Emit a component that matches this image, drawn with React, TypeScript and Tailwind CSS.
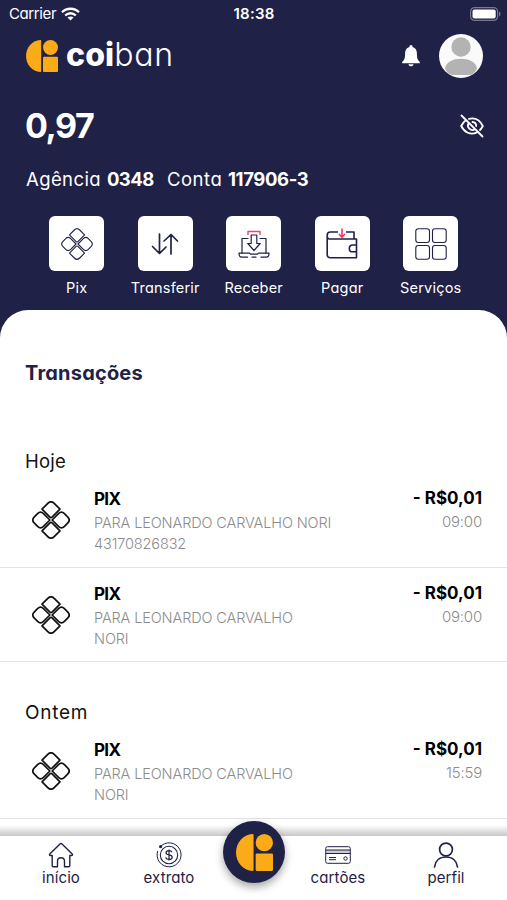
import type { ReactNode } from "react";

const LogoMark = ({ className }: { className?: string }) => (
  <svg viewBox="0 0 32 32" className={className} fill="#fbab18">
    <path d="M14.2 0C6.2.4 0 7.6 0 16s6.2 15.600 14.200 16c.6 0 1-.4 1-1V1c0-.6-.4-1-1-1z" />
    <circle cx="24.500" cy="7.500" r="7.500" />
    <rect x="17" y="16.800" width="15" height="15.200" rx="1" />
  </svg>
);

const PixIcon = ({ className }: { className?: string }) => (
  <svg viewBox="0 0 38 38" className={className} fill="none" stroke="currentColor" strokeLinejoin="round">
    <g transform="rotate(45 19 19)">
      <path d="M19.800 18.200V9.200Q19.800 5 24 5H28.500Q33 5 33 9.500V14Q33 18.200 28.800 18.200z" />
      <path d="M18.200 19.800V28.800Q18.200 33 14 33H9.500Q5 33 5 28.500V24Q5 19.800 9.200 19.800z" />
      <path d="M9.500 5H17.700V16.200Q17.700 17.700 16.200 17.700H5V9.500Q5 5 9.500 5z" />
      <path d="M28.500 33H20.300V21.800Q20.300 20.300 21.800 20.300H33V28.500Q33 33 28.500 33z" />
    </g>
  </svg>
);

const TransferIcon = () => (
  <svg viewBox="0 0 28 22" className="w-7 h-[22px]" fill="none" stroke="#1f2147" strokeWidth="1.700" strokeLinecap="round" strokeLinejoin="round">
    <path d="M8.500 1v19M1.500 13.500l7 7 6.500-6.500M20 21V1.500M13 8l7-6.500L26.500 8" />
  </svg>
);

const ReceiveIcon = () => (
  <svg viewBox="0 0 32 28" className="w-8 h-7" fill="none" stroke="#1f2147" strokeWidth="1.200" strokeLinejoin="round" strokeLinecap="round">
    <path d="M10 5V1.500h12V5" stroke="#f0436b" strokeLinecap="butt" strokeWidth="1.400" />
    <path d="M10 8.500H4v14.500M22 8.500h6v14.500" />
    <path d="M13.200 5h5.600v8.500h3.400L16 20.500 9.800 13.500h3.400z" />
    <path d="M1 23.200h10.500l1 1h7l1-1H31c0 2.500-1 4-2.500 4H23M18 27.200h-4M9.500 27.200h-6C2 27.200 1 25.700 1 23.200" />
  </svg>
);

const WalletIcon = () => (
  <svg viewBox="0 0 32 32" className="w-8 h-8" fill="none" stroke="#1f2147" strokeWidth="1.600" strokeLinejoin="round">
    <path d="M12 4H4.500C2.500 4 1.200 5.200 1.200 7v19.500c0 2 1.300 3.300 3.300 3.300h26V11H3C1.800 10.500 1.200 9.500 1.200 8M20 4h8v7" />
    <path d="M30.500 17h-3.800c-4.500 0-4.500 6.800 0 6.800h3.800" />
    <path d="M16 .5V9M13 6l3 3.200L19 6" stroke="#ef3564" />
  </svg>
);

const GridIcon = () => (
  <svg viewBox="0 0 32 32" className="w-8 h-8" fill="none" stroke="#1f2147" strokeWidth="1.100">
    <rect x=".8" y=".8" width="13.700" height="13.700" rx="2.500" />
    <rect x="17.500" y=".8" width="13.700" height="13.700" rx="2.500" />
    <rect x=".8" y="17.500" width="13.700" height="13.700" rx="2.500" />
    <rect x="17.500" y="17.500" width="13.700" height="13.700" rx="2.500" />
  </svg>
);

const HomeIcon = () => (
  <svg viewBox="0 0 26 26" className="w-[26px] h-[26px]" fill="none" stroke="#1f2147" strokeWidth="1.400" strokeLinejoin="round">
    <path d="M4.200 13.500v10.300c0 .6.400 1 1 1h4.300v-5.500c0-4.700 7-4.700 7 0v5.500h4.300c.6 0 1-.4 1-1V13.500h1.700c1 0 1.300-1 .7-1.600L14 2.100c-.6-.6-1.400-.6-2 0L1.800 11.900c-.6.6-.3 1.600.7 1.600z" />
  </svg>
);

const StatementIcon = () => (
  <svg viewBox="0 0 26 26" className="w-[26px] h-[26px]" fill="none" stroke="#1f2147">
    <path d="M3.800 5.200A12 12 0 1 1 1.700 9" />
    <circle cx="13" cy="13" r="8.700" strokeWidth="1.100" />
    <path d="M13 7.500v11M16 10.200c-.4-1-1.500-1.500-3-1.500-1.700 0-3 .7-3 2.100 0 3 6.200 1.300 6.200 4.400 0 1.300-1.300 2.200-3.200 2.200-1.800 0-3-.7-3.300-2" strokeWidth="1.200" />
    <circle cx="4.600" cy="4.600" r="1.600" fill="#1f2147" stroke="none" />
  </svg>
);

const CardIcon = () => (
  <svg viewBox="0 0 26 18" className="w-[26px] h-[18px]" fill="none" stroke="#1f2147" strokeWidth="1">
    <rect x="1" y="4" width="24" height="3.500" fill="#c9c9d6" stroke="none" />
    <rect x=".7" y=".7" width="24.600" height="16.600" rx="1.800" />
    <path d="M1 4h24M1 7.500h24M4 11.500h7M4 13.700h7" />
    <circle cx="20.500" cy="12.500" r="1.700" />
  </svg>
);

const UserIcon = () => (
  <svg viewBox="0 0 26 26" className="w-[26px] h-[26px]" fill="none" stroke="#1f2147" strokeWidth="1.700" strokeLinecap="round">
    <circle cx="13" cy="7.500" r="6.400" />
    <path d="M1.500 25c.8-6.200 5.200-10 11.500-10s10.700 3.800 11.500 10" />
  </svg>
);

const actions = [
  { label: "Pix", icon: <PixIcon className="w-8 h-8 stroke-[1.300]" /> },
  { label: "Transferir", icon: <TransferIcon /> },
  { label: "Receber", icon: <ReceiveIcon /> },
  { label: "Pagar", icon: <WalletIcon /> },
  { label: "Serviços", icon: <GridIcon /> },
];

const Transaction = ({ lines, time }: { lines: string[]; time: string }) => (
  <div className="h-[94.500px] border-b border-[#e4e4e4] pl-8 pr-[25px] flex">
    <PixIcon className="w-[38px] h-[38px] mt-[28px] mr-6 stroke-[1.700] text-[#111]" />
    <div className="flex-1 pt-[14px]">
      <p className="text-[17px] leading-[25px] tracking-[-0.700px] font-bold text-black">PIX</p>
      {lines.map((line) => (
        <p key={line} className="text-[14.500px] leading-[21px] tracking-[-0.130px] text-[#8c8c8c] font-light">{line}</p>
      ))}
    </div>
    <div className="text-right pt-[13px]">
      <p className="text-[17px] leading-6 font-bold text-black">- R$0,01</p>
      <p className="text-[15px] leading-[23px] tracking-[-0.200px] text-[#8c8c8c] font-light">{time}</p>
    </div>
  </div>
);

const Tab = ({ label, children }: { label: string; children: ReactNode }) => (
  <div className="w-[108px] flex flex-col items-center text-[#1f2147]">
    <div className="h-[26px] flex items-center">{children}</div>
    <span className="text-[15px] leading-5 tracking-[0.100px]">{label}</span>
  </div>
);

export default function App() {
  return (
    <div className="w-[507px] h-[900px] overflow-hidden bg-[#1f2147] flex flex-col font-['Inter',sans-serif] [font-feature-settings:'cv11']">
      <header className="h-[309.500px] shrink-0 text-white">
        <div className="h-7 pl-[9px] pr-[6px] grid grid-cols-3 items-center text-[15px]">
          <div className="flex items-center gap-[5px] tracking-[-0.400px]">
            <span>Carrier</span>
            <svg viewBox="0 0 19 14" className="w-[19px] h-[14px]" fill="none" stroke="white" strokeWidth="2.300">
              <path d="M1 5.200C5.500.6 13.500.6 18 5.200M4.200 8.500c3-3 7.600-3 10.600 0" />
              <path d="M9.500 13.500L6.500 10.500c1.700-1.500 4.300-1.500 6 0z" fill="white" stroke="none" />
            </svg>
          </div>
          <span className="text-center pr-[2px] tracking-[0.200px] font-semibold">18:38</span>
          <svg viewBox="0 0 31 14" className="w-[31px] h-[14px] justify-self-end">
            <rect x=".6" y=".6" width="27" height="12.800" rx="4" fill="none" stroke="#777890" strokeWidth="1.200" />
            <rect x="2.500" y="2.500" width="23.200" height="9" rx="2" fill="white" />
            <path d="M29 4.500c2 .8 2 4.200 0 5z" fill="#777890" />
          </svg>
        </div>

        <div className="h-14 pl-[26px] pr-6 flex items-center">
          <LogoMark className="w-8 h-8" />
          <span className="ml-2 -mt-[2px] text-[32px] leading-8">
            <b className="font-extrabold tracking-[0.100px]">coi</b>
            <span className="font-light tracking-[0.700px]">ban</span>
          </span>
          <svg viewBox="0 0 18 22" className="w-[18px] h-[22px] ml-auto mr-[19px]" fill="white">
            <path d="M9 0c1 0 1.600.8 1.600 1.900 3 .8 4.300 3.200 4.300 6.400 0 5 .8 7.200 2.900 8.500v1.400H.2v-1.400c2.100-1.300 2.900-3.500 2.900-8.500 0-3.200 1.300-5.600 4.300-6.400C7.400.8 8 0 9 0zM6.500 19.200h5C11.300 20.600 10.300 21.300 9 21.300s-2.300-.7-2.500-2.100z" />
          </svg>
          <svg viewBox="0 0 44 44" className="w-11 h-11">
            <circle cx="22" cy="22" r="22" fill="#fafafa" />
            <circle cx="22" cy="13" r="9.700" fill="#b3b3b3" />
            <path d="M6 34.500c1.500-13 30.500-13 32 0-1.500 3.500-4 6-7 6.500H13c-3-.5-5.500-3-7-6.500z" fill="#b3b3b3" />
          </svg>
        </div>

        <div className="h-[84px] pl-[25px] pr-[23px] flex items-center justify-between">
          <span className="-mt-[2px] text-[34px] tracking-[-1.400px] font-bold">0,97</span>
          <svg viewBox="0 0 24 24" className="w-6 h-6" fill="none" stroke="white" strokeWidth="1.800" strokeLinecap="round">
            <path d="M1.500 1.500l21 21M9 4.900c6-1.600 11 1.500 13.800 7.100-.8 1.600-1.700 2.900-2.800 4M5.500 6.500C3.800 7.800 2.300 9.700 1.200 12c3.300 6.600 9.300 9.300 15.300 6.700M8.700 9.300c-2.600 3.600 2.300 8.800 6.100 5.800M12.500 8c2.300.2 3.700 1.800 3.700 4" />
          </svg>
        </div>

        <div className="h-6 pl-[26px] flex items-center text-[18.500px]">
          <span className="w-[81px] tracking-[0.400px]">Agência</span>
          <b className="w-[60px] tracking-[-0.600px]">0348</b>
          <span className="w-[61px] tracking-[0.500px]">Conta</span>
          <b className="tracking-[-0.400px]">117906-3</b>
        </div>

        <div className="mt-6 pl-[32.500px] flex">
          {actions.map(({ label, icon }) => (
            <div key={label} className="w-[88.500px] flex flex-col items-center">
              <div className="w-[55px] h-[55px] rounded-md bg-white text-[#1f2147] flex items-center justify-center">{icon}</div>
              <span className="mt-[7px] text-[14.500px] leading-5 tracking-[0.200px]">{label}</span>
            </div>
          ))}
        </div>
      </header>

      <main className="flex-1 min-h-0 overflow-hidden rounded-t-[28px] bg-white">
        <h1 className="mt-[49.500px] ml-[25px] text-[20px] leading-7 tracking-[0.200px] font-bold text-[#1f2147]">Transações</h1>
        <h2 className="mt-[60px] ml-[25px] h-[26px] text-[18.500px] leading-7 tracking-[0.200px] text-[#111]">Hoje</h2>
        <Transaction lines={["PARA LEONARDO CARVALHO NORI", "43170826832"]} time="09:00" />
        <Transaction lines={["PARA LEONARDO CARVALHO", "NORI"]} time="09:00" />
        <h2 className="mt-9 ml-[25px] h-[26px] text-[19px] leading-[29px] tracking-[0.700px] text-[#111]">Ontem</h2>
        <Transaction lines={["PARA LEONARDO CARVALHO", "NORI"]} time="15:59" />
      </main>

      <nav className="relative h-16 shrink-0 bg-white pt-[6px] px-[7px] flex justify-between">
        <div className="absolute bottom-full left-0 w-full h-[11px] bg-linear-to-b from-white/0 to-[#c8c8c8]" />
        <Tab label="início"><HomeIcon /></Tab>
        <Tab label="extrato"><StatementIcon /></Tab>
        <div className="absolute left-[223px] -top-[15px] w-[62px] h-[62px] rounded-full bg-[#1f2147] shadow-[0_4px_8px_rgba(0,0,0,0.350)] flex items-center justify-center">
          <LogoMark className="w-[37px] h-[37px]" />
        </div>
        <div className="w-[61px]" />
        <Tab label="cartões"><CardIcon /></Tab>
        <Tab label="perfil"><UserIcon /></Tab>
      </nav>
    </div>
  );
}
